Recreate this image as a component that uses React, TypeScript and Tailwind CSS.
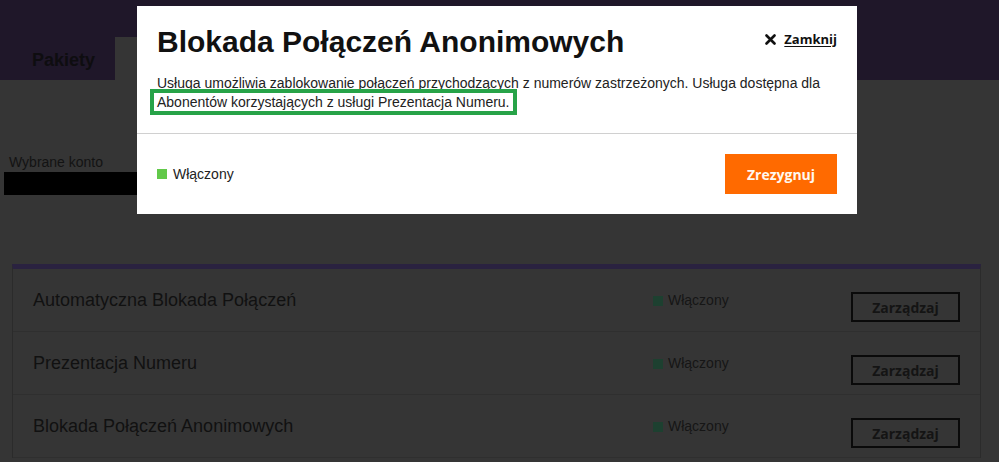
const services = [
  { name: "Automatyczna Blokada Połączeń", status: "Włączony" },
  { name: "Prezentacja Numeru", status: "Włączony" },
  { name: "Blokada Połączeń Anonimowych", status: "Włączony" },
];

function ServiceRow({ name, status }: { name: string; status: string }) {
  return (
    <div className="flex h-[63px] border-b border-[#2f2f2f] px-5">
      <div className="flex-1 self-center text-[18px] leading-[22px] text-[#111]">{name}</div>
      <div className="flex w-[198px] items-start gap-[5px] pt-[21px]">
        <span className="mt-[6px] h-[10px] w-[10px] bg-[#1d4030]" />
        <span className="text-[14px] leading-5 text-[#161616]">{status}</span>
      </div>
      <button className="mb-[9px] h-[30px] w-[109px] self-end border-2 border-[#0a0a0a] font-['Open_Sans',sans-serif] text-[14px] font-bold text-[#141414]">
        Zarządzaj
      </button>
    </div>
  );
}

function Modal() {
  return (
    <div className="absolute left-[137px] top-[6px] w-[720px] bg-white font-['Liberation_Sans',Arial,sans-serif]">
      <div className="px-5 pb-[18px] pt-[18px]">
        <div className="flex items-start justify-between">
          <h2 className="text-[30px] font-bold leading-[36px] text-[#111]">Blokada Połączeń Anonimowych</h2>
          <button className="mt-[6px] flex items-center gap-2 font-['Open_Sans',sans-serif] text-[13px] font-bold leading-[18px] text-[#111]">
            <svg className="h-[11px] w-[11px]" viewBox="0 0 11 11" fill="none" stroke="currentColor" strokeWidth={2.6} strokeLinecap="round">
              <path d="M1.5 1.5l8 8M9.5 1.5l-8 8" />
            </svg>
            <span className="underline underline-offset-2">Zamknij</span>
          </button>
        </div>
        <p className="mt-[14px] text-[14px] leading-[18px] text-[#222]">
          Usługa umożliwia zablokowanie połączeń przychodzących z numerów zastrzeżonych. Usługa dostępna dla
          <br />
          <span className="-ml-[7px] -mt-[3px] inline-block border-4 border-[#27a348] px-[3px] leading-[18px]">
            Abonentów korzystających z usługi Prezentacja Numeru.
          </span>
        </p>
      </div>
      <div className="flex items-center justify-between border-t border-[#d0d0d0] px-5 py-5">
        <div className="flex items-center gap-[6px]">
          <span className="h-[10px] w-[10px] bg-[#62c94a]" />
          <span className="text-[14px] leading-5 text-[#222]">Włączony</span>
        </div>
        <button className="h-[40px] w-[112px] bg-[#ff6a00] font-['Open_Sans',sans-serif] text-[14px] font-bold text-[#fff8ef]">
          Zrezygnuj
        </button>
      </div>
    </div>
  );
}

export default function App() {
  return (
    <div className="relative h-[462px] w-full overflow-hidden bg-[#353535] font-['Liberation_Sans',Arial,sans-serif]">
      <header className="flex h-[80px] items-end bg-[#1f1729]">
        <div className="flex h-[43px] w-[115px] items-center pl-8 pt-[4px] text-[18px] font-bold text-[#0e0d10]">Pakiety</div>
        <div className="h-[43px] w-[120px] bg-[#353535]" />
      </header>

      <div className="pt-[72px]">
        <div className="pl-[9px] text-[14px] leading-5 text-[#131313]">Wybrane konto</div>
        <div className="ml-1 h-[23px] w-[260px] bg-black" />
      </div>

      <div className="ml-3 mr-[18px] mt-[69px] border-x border-t-[5px] border-x-[#2b2b2b] border-t-[#2a2240]">
        {services.map((s) => (
          <ServiceRow key={s.name} {...s} />
        ))}
      </div>

      <Modal />
    </div>
  );
}
